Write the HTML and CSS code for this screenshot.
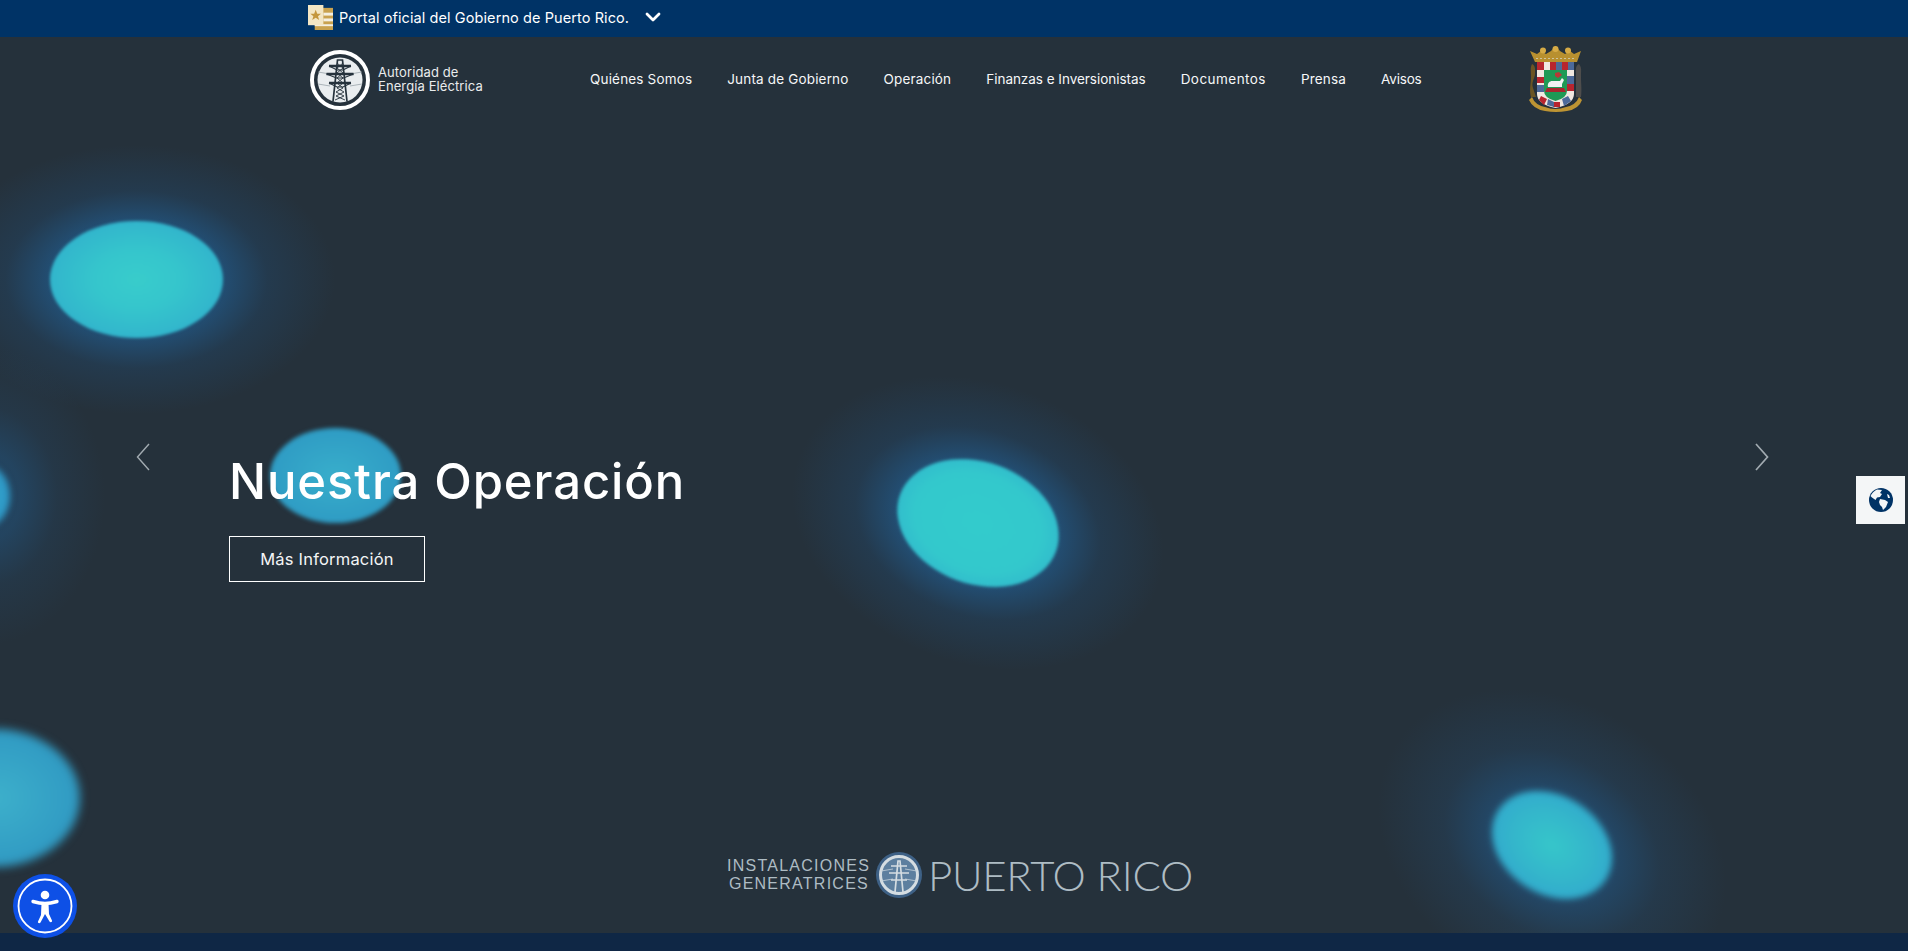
FILE: index.html
```html
<!DOCTYPE html>
<html lang="es">
<head>
<meta charset="utf-8">
<title>Autoridad de Energía Eléctrica</title>
<link rel="stylesheet" href="styles.css">
</head>
<body>
<div class="topbar">
  <svg class="flag" viewBox="0 0 26 26" aria-hidden="true">
    <rect x="7" y="3" width="19" height="23" fill="#c9a24f"/>
    <rect x="16" y="8" width="10" height="3" fill="#f4efe2"/>
    <rect x="16" y="14" width="10" height="3" fill="#f4efe2"/>
    <rect x="7" y="20" width="19" height="2" fill="#f4efe2"/>
    <rect x="0" y="0" width="16" height="21" fill="#f3e6c4"/>
    <polygon points="8,5 9.600,9 13.500,9 10.400,11.600 11.600,15.600 8,13.200 4.400,15.600 5.600,11.600 2.500,9 6.400,9" fill="#c4963c"/>
  </svg>
  <span class="portal">Portal oficial del Gobierno de Puerto Rico.</span>
  <svg class="chev" viewBox="0 0 16 12" aria-hidden="true"><path d="M2 3l6 6 6-6" fill="none" stroke="#fff" stroke-width="2.800" stroke-linecap="round" stroke-linejoin="round"/></svg>
</div>

<main class="hero">
  <div class="blobs" aria-hidden="true">
    <div class="blob b1"></div>
    <div class="blob b2"></div>
    <div class="blob b3"></div>
    <div class="blob b4"></div>
    <div class="blob b5"></div>
    <div class="blob b6"></div>
  </div>

  <header class="nav">
    <a class="brand">
      <svg class="brand-mark" viewBox="0 0 60 60" aria-hidden="true">
        <circle cx="30" cy="30" r="28" fill="none" stroke="#fff" stroke-width="4"/>
        <circle cx="30" cy="30" r="22.500" fill="#e9edef"/>
        <path d="M8 22l12 2M8 34l12 2M52 22l-12 2M52 34l-12 2" stroke="#9aa4ab" stroke-width=".8" fill="none"/>
        <g stroke="#25323c" fill="none">
          <path d="M23 51.500L27.500 10h5L37 51.500" stroke-width="1.700"/>
          <path d="M19 16h22M16.500 24h27M19 33h22" stroke-width="2.400"/>
          <path d="M19 16l8 4h6l8-4M16.500 24l10 4h7l10-4M19 33l8 4h6l8-4" stroke-width="1.100"/>
          <path d="M27 13l6 5-6 5 6 5-6 5 6 5-7 4 8 4-9 4M33 13l-6 5 6 5-6 5 6 5-6 5 7 4-8 4 9 4" stroke-width=".9"/>
        </g>
      </svg>
      <span class="brand-text">Autoridad de<br>Energía Eléctrica</span>
    </a>
    <nav class="menu">
      <a>Quiénes Somos</a>
      <a>Junta de Gobierno</a>
      <a>Operación</a>
      <a class="tight">Finanzas e Inversionistas</a>
      <a class="wide">Documentos</a>
      <a>Prensa</a>
      <a class="tighter">Avisos</a>
    </nav>
    <svg class="arms" viewBox="0 0 53 66" aria-hidden="true">
      <path d="M1 5l7 3 4-3 5 3 5-3 4.500-5L31 5l5 3 5-3 4 3 7-3-4 11H6z" fill="#b8902f"/>
      <circle cx="14" cy="4.500" r="3" fill="#d6ab46"/><circle cx="26.500" cy="3" r="3" fill="#d6ab46"/><circle cx="39" cy="4.500" r="3" fill="#d6ab46"/>
      <path d="M7 12.500h39" stroke="#cfc49f" stroke-width="1" stroke-dasharray="2 2"/>
      <path d="M3 18c4 2 3 6 3 10s-4 8-2 14l3 9H2c-2-8 0-13 0-20s-1-9 1-13z" fill="#6a5524"/>
      <path d="M50 18c-4 2-3 6-3 10v23h5c1-8 0-13 0-20s1-9-2-13z" fill="#4e4d4c"/>
      <path d="M8 16h37v32q0 10-18.500 14Q8 58 8 48z" fill="#f0e8e1"/>
      <path d="M8 16h7v8H8zM21 16h6v8h-6zM33 16h6v8h-6zM8 31h7v6H8zM38 38h7v7h-7zM12 50l6 3-3 6-5-5zM24 56h7v5h-7z" fill="#b8252f"/>
      <path d="M27 16h6v8h-6zM39 16h6v8h-6zM38 30h7v8h-7zM8 39h7v7H8zM19 53l6 3v5l-7-2zM33 53l6-3 3 5-7 5z" fill="#4d6a9a"/>
      <path d="M15 24h23v21q0 7-11.500 10Q15 52 15 45z" fill="#1f9a55"/>
      <path d="M18 42h17l2 4H16z" fill="#a8262d"/>
      <path d="M19 41c-1-4 2-6 4-6h8l2-3 2 2-2 4v3z" fill="#f2f2f2"/>
      <path d="M26 27l4-1 3 3-4 3-3-2z" fill="#b83a36"/>
      <path d="M3 51q3 8 13 10 10 4 21 0 10-2 13-10l3 3q-3 9-15 11-11 2-22 0Q4 63 0 54z" fill="#bd9433"/>
    </svg>
  </header>

  <section class="slide">
    <h1>Nuestra Operación</h1>
    <a class="more">Más Información</a>
  </section>

  <div class="tag">
    <span class="tag-small">INSTALACIONES<br>GENERATRICES</span>
    <svg class="tag-mark" viewBox="0 0 46 46" aria-hidden="true">
      <circle cx="23" cy="23" r="23" fill="#3e6186"/>
      <circle cx="23" cy="23" r="18.500" fill="#5d7f9f" stroke="#d5dde2" stroke-width="3"/>
      <path d="M5 19l12-2M5 29l12-2M41 19l-12-2M41 29l-12-2" stroke="#c5d2da" stroke-width=".8"/>
      <path d="M19 40L22 9h2l3 31M15 14h16M13 21h20M15 28h16" stroke="#d5dde2" stroke-width="1.700" fill="none"/>
    </svg>
    <span class="tag-big">PUERTO RICO</span>
  </div>

  <svg class="arrow arrow-left" viewBox="0 0 14 28" aria-hidden="true"><path d="M13 1L1.500 14 13 27" fill="none" stroke="#a2abb1" stroke-width="1.400"/></svg>
  <svg class="arrow arrow-right" viewBox="0 0 14 28" aria-hidden="true"><path d="M1 1l11.500 13L1 27" fill="none" stroke="#a2abb1" stroke-width="1.700"/></svg>
</main>

<footer class="band"></footer>

<a class="lang" aria-label="Idioma">
  <svg viewBox="0 0 24 24" aria-hidden="true">
    <circle cx="12" cy="12" r="12" fill="#003366"/>
    <path d="M8 1.500l5 .5-2 3 2 1-2 3-3 .5-1.500 2.500L3 9.500 1.500 8C3 5 5 3 8 1.500zM11 11l5 1 3 2-2 5-3 3-1-3-2-2-1-3zM18 6l2 1 1 3-2 0z" fill="#f4f6f7"/>
  </svg>
</a>

<a class="access" aria-label="Accesibilidad">
  <svg viewBox="0 0 64 64" aria-hidden="true">
    <circle cx="32" cy="32" r="32" fill="#0e50e6"/>
    <circle cx="32" cy="32" r="26.500" fill="none" stroke="#fff" stroke-width="1.800"/>
    <circle cx="32" cy="21" r="4.300" fill="#fff"/>
    <path d="M20 27.500c5 1.500 8 2 12 2s7-.5 12-2" fill="none" stroke="#fff" stroke-width="3.400" stroke-linecap="round"/>
    <path d="M28.500 29h7l.5 11 3 6.500c.6 1.500-1.600 2.500-2.500 1L32 40l-4.500 8.500c-.9 1.500-3.100.5-2.500-1l3-6.500z" fill="#fff"/>
  </svg>
</a>
</body>
</html>
```

FILE: styles.css
```css
* { box-sizing: border-box; }
html, body { margin: 0; height: 951px; overflow: hidden; }
body {
  display: flex;
  flex-direction: column;
  background: #25313b;
  color: #fff;
  font-family: Inter, "Open Sans", "Liberation Sans", sans-serif;
}

/* top strip */
.topbar {
  height: 37px;
  flex: none;
  display: flex;
  align-items: center;
  padding: 0 0 3px 308px;
  background: #003366;
  position: relative;
  z-index: 2;
}
.flag { width: 25px; height: 25px; flex: none; }
.portal { margin-left: 6px; font-size: 14.500px; letter-spacing: .09px; white-space: nowrap; }
.chev { width: 16px; height: 12px; margin-left: 16px; }

/* hero */
.hero {
  position: relative;
  flex: 1;
  min-height: 0;
  display: flex;
  flex-direction: column;
  overflow: hidden;
  background: #25313b;
}
.blobs { position: absolute; inset: 0; }
.blob { position: absolute; }
.blob::before {
  content: "";
  position: absolute;
  inset: -65%;
  border-radius: 50%;
  background: radial-gradient(closest-side, rgba(33, 92, 142, .7) 42%, rgba(33, 76, 115, .34) 66%, rgba(37, 49, 59, 0) 100%);
}
.blob::after {
  content: "";
  position: absolute;
  inset: 0;
  border-radius: 50%;
  background: radial-gradient(ellipse at center, #38cccb 0%, #35c5cc 35%, #2fa8cb 100%);
  filter: blur(1.500px);
}
.b1 { left: 50px; top: 184px; width: 173px; height: 117px; }
.b2 { left: 270px; top: 391px; width: 131px; height: 95px; }
.b2::before { display: none; }
.b2::after {
  background: radial-gradient(ellipse at center, #38aecb 0%, #2f9cc4 70%, #2a8fbc 100%);
  filter: blur(2px);
}
.b3 { left: 895px; top: 425px; width: 166px; height: 122px; transform: rotate(20deg); }
.b3::after { background: radial-gradient(ellipse at center, #33cbcc 0%, #33c8cc 55%, #2eaacb 100%); }
.b4 { left: 1488px; top: 759px; width: 128px; height: 98px; transform: rotate(33deg); }
.b4::before {
  inset: -95%;
  background: radial-gradient(closest-side, rgba(33, 88, 135, .6) 34%, rgba(36, 74, 108, .32) 62%, rgba(37, 49, 59, 0) 100%);
}
.b4::after {
  filter: blur(3px);
  background: radial-gradient(ellipse at center, #36c6ca 0%, #34b6cb 45%, #2f9fce 100%);
}
.b5 { left: -40px; top: 428px; width: 50px; height: 62px; }
.b5::before {
  inset: -190%;
  background: radial-gradient(closest-side, rgba(34, 84, 126, .55) 30%, rgba(36, 70, 100, .3) 60%, rgba(37, 49, 59, 0) 100%);
}
.b5::after {
  filter: blur(3px);
  background: radial-gradient(ellipse at center, #34a8cf 0%, #2b8fc0 100%);
}
.b6 { left: -90px; top: 692px; width: 170px; height: 138px; }
.b6::before { display: none; }
.b6::after {
  filter: blur(5px);
  background: radial-gradient(ellipse at center, #3db0cb 0%, #329dc4 60%, #2c8dba 100%);
}

/* navigation */
.nav {
  position: relative;
  height: 86px;
  flex: none;
  display: flex;
  align-items: center;
  padding-left: 310px;
}
.brand { display: flex; align-items: center; width: 280px; flex: none; }
.brand-mark { width: 60px; height: 60px; flex: none; }
.brand-text { margin-left: 8px; padding-bottom: 2px; font-size: 13px; line-height: 14px; letter-spacing: .1px; color: #e9eced; white-space: nowrap; }
.menu { display: flex; gap: 35px; padding-bottom: 2px; }
.menu a { font-size: 13.500px; letter-spacing: .17px; white-space: nowrap; color: #f6f7f8; }
.menu .tight { letter-spacing: -.03px; }
.menu .wide { letter-spacing: .46px; }
.menu .tighter { letter-spacing: -.18px; }
.arms { width: 53px; height: 66px; position: absolute; left: 1529px; top: 9px; }

/* slide copy */
.slide {
  position: relative;
  padding: 329px 0 0 229px;
  display: flex;
  flex-direction: column;
  align-items: flex-start;
}
h1 {
  margin: 0;
  font-size: 49px;
  line-height: 60px;
  font-weight: 500;
  letter-spacing: .9px;
  white-space: nowrap;
}
.more {
  margin-top: 24px;
  width: 196px;
  height: 46px;
  display: flex;
  align-items: center;
  justify-content: center;
  border: 1px solid #fff;
  font-size: 16.500px;
  letter-spacing: .2px;
  color: #f4f5f6;
}

/* bottom wordmark */
.tag {
  position: relative;
  margin-top: auto;
  padding-bottom: 35px;
  padding-left: 727px;
  display: flex;
  align-items: center;
  color: #aebcc4;
}
.tag-small { display: block; width: 142px; font-family: "Liberation Sans", Arial, sans-serif; font-size: 16px; line-height: 18.500px; letter-spacing: 1.25px; text-align: right; white-space: nowrap; }
.tag-mark { width: 46px; height: 46px; margin-left: 7px; flex: none; }
.tag-big { margin-left: 6px; font-family: Lato, Inter, sans-serif; font-weight: 300; font-size: 42px; line-height: 46px; letter-spacing: -.3px; white-space: nowrap; }

/* overlays */
.arrow { position: absolute; width: 14px; height: 28px; top: 406px; }
.arrow-left { left: 136px; }
.arrow-right { left: 1755px; }
.band { height: 18px; flex: none; background: #0f2745; }
.lang {
  position: fixed;
  left: 1856px;
  top: 476px;
  width: 49px;
  height: 48px;
  background: #f4f6f7;
  display: flex;
  align-items: center;
  justify-content: center;
}
.lang svg { width: 24px; height: 24px; }
.access { position: fixed; left: 13px; top: 874px; width: 64px; height: 64px; }
.access svg { width: 64px; height: 64px; display: block; }
```
